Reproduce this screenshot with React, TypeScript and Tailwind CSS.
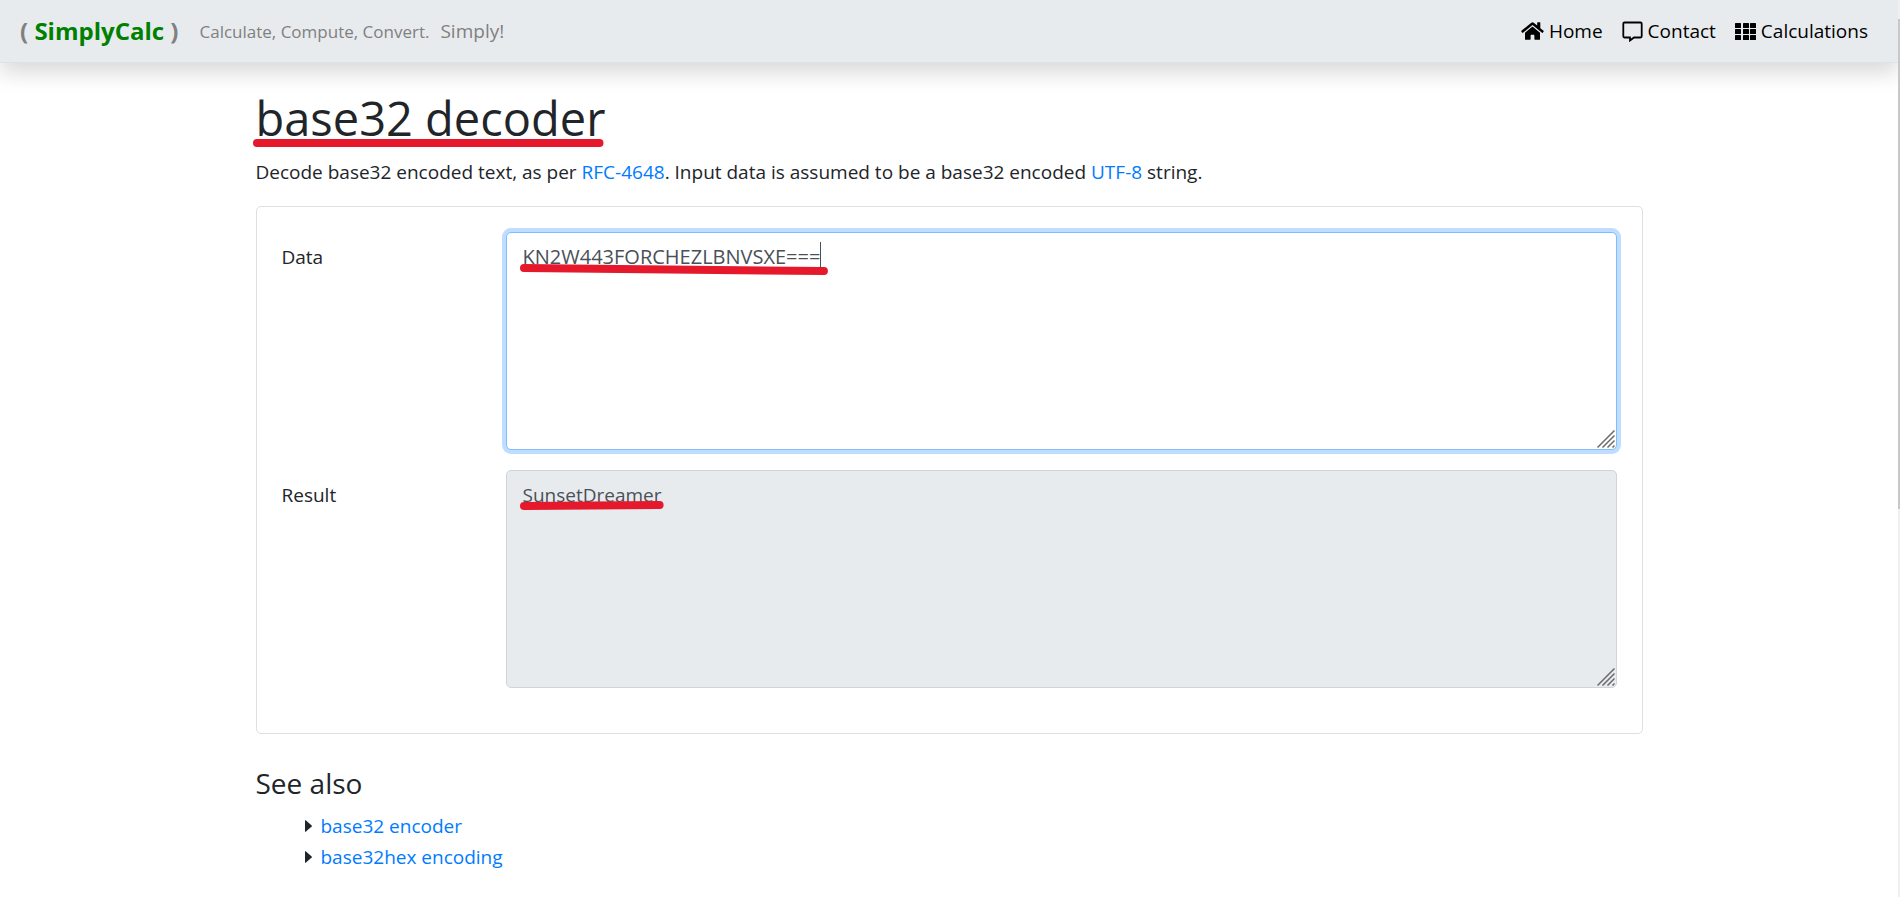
import { useState } from "react";

function decodeBase32(input: string): string {
  const alphabet = "ABCDEFGHIJKLMNOPQRSTUVWXYZ234567";
  const bytes: number[] = [];
  let buffer = 0;
  let bits = 0;
  for (const char of input.trim().replace(/=+$/, "").toUpperCase()) {
    const value = alphabet.indexOf(char);
    if (value < 0) return "";
    buffer = ((buffer << 5) | value) & 0xfff;
    bits += 5;
    if (bits >= 8) {
      bits -= 8;
      bytes.push((buffer >> bits) & 0xff);
    }
  }
  return new TextDecoder().decode(new Uint8Array(bytes));
}

function HomeIcon() {
  return (
    <svg viewBox="0 0 576 512" className="h-5 w-[23px]" fill="currentColor" aria-hidden="true">
      <path d="M280.37 148.26L96 300.11V464a16 16 0 0 0 16 16l112.06-.29a16 16 0 0 0 15.92-16V368a16 16 0 0 1 16-16h64a16 16 0 0 1 16 16v95.64a16 16 0 0 0 16 16.05L464 480a16 16 0 0 0 16-16V300L295.67 148.26a12.19 12.19 0 0 0-15.3 0zM571.6 251.47L488 182.56V44.05a12 12 0 0 0-12-12h-56a12 12 0 0 0-12 12v72.61L318.47 43a48 48 0 0 0-61 0L4.34 251.47a12 12 0 0 0-1.6 16.9l25.5 31A12 12 0 0 0 45.15 301l235.22-193.74a12.19 12.19 0 0 1 15.3 0L530.9 301a12 12 0 0 0 16.9-1.6l25.5-31a12 12 0 0 0-1.7-16.93z" />
    </svg>
  );
}

function ContactIcon() {
  return (
    <svg viewBox="0 0 21 21" className="size-[21px]" fill="none" stroke="currentColor" strokeWidth="1.8" aria-hidden="true">
      <path d="M2.500 1.500H18.500Q19.700 1.500 19.700 2.700V15.300Q19.700 16.500 18.500 16.500H12L8 19.500V16.500H2.500Q1.300 16.500 1.300 15.300V2.700Q1.300 1.500 2.500 1.500Z" />
    </svg>
  );
}

function GridIcon() {
  return (
    <svg viewBox="0 0 21 17" className="h-[17px] w-[21px]" fill="currentColor" aria-hidden="true">
      {[0, 6, 12].map((y) =>
        [0, 8, 15].map((x) => <rect key={`${x}-${y}`} x={x} y={y} width="6" height="5" rx="0.6" />),
      )}
    </svg>
  );
}

function ResizeGrip() {
  return (
    <svg
      viewBox="0 0 18 18"
      className="pointer-events-none absolute right-[2px] bottom-[2px] size-[18px]"
      stroke="#6b6b6b"
      strokeWidth="1.5"
      aria-hidden="true"
    >
      <path d="M.5 17.500L17.500.5M5.500 17.500l12-12M10.500 17.500l7-7M15.500 17.500l2-2" />
    </svg>
  );
}

function Marker({ className, rise = 0 }: { className: string; rise?: number }) {
  return (
    <svg className={`pointer-events-none absolute h-[11px] overflow-visible ${className}`} aria-hidden="true">
      <line x1="4" y1="4" x2="99%" y2={4 + rise} stroke="#e5182c" strokeWidth="8" strokeLinecap="round" />
    </svg>
  );
}

const navItems = [
  { label: "Home", icon: <HomeIcon /> },
  { label: "Contact", icon: <ContactIcon /> },
  { label: "Calculations", icon: <GridIcon /> },
];

const related = ["base32 encoder", "base32hex encoding"];

const fieldClass =
  "block h-[218px] w-full resize-none rounded-[5px] border px-4 py-[9px] leading-[30px] text-[#495057] outline-none";

export default function App() {
  const [data, setData] = useState("KN2W443FORCHEZLBNVSXE===");

  return (
    <div className="relative min-h-screen bg-white pr-[2px] font-['Open_Sans','Noto_Sans',sans-serif] text-[19px] leading-[30px] text-[#212529]">
      <header className="flex h-[63px] items-center justify-between border-b border-[#dee2e6] bg-[#e8ebee] pr-[30px] pl-5 shadow-[0_10px_20px_rgba(0,0,0,0.15)]">
        <div className="flex items-center">
          <a href="#" className="text-2xl font-bold text-[#808080]">
            ( <span className="text-[#008000]">SimplyCalc</span> )
          </a>
          <p className="ml-[21px] text-[#808080]">
            <span className="text-[17px]">Calculate, Compute, Convert.</span>
            <span className="ml-[11px]">Simply!</span>
          </p>
        </div>
        <nav className="flex items-center gap-[19px] text-black">
          {navItems.map((item) => (
            <a key={item.label} href="#" className="flex items-center gap-[5px]">
              {item.icon}
              {item.label}
            </a>
          ))}
        </nav>
      </header>

      <main className="mx-auto w-full max-w-[1387px] pt-[25px]">
        <h1 className="relative w-fit text-[47px] leading-[60px]">
          base32 decoder
          <Marker className="-left-[3px] top-[51px] w-[350px]" />
        </h1>
        <p className="mt-[9px]">
          Decode base32 encoded text, as per{" "}
          <a href="#" className="text-[#007bff]">RFC-4648</a>. Input data is assumed to be a base32 encoded{" "}
          <a href="#" className="text-[#007bff]">UTF-8</a> string.
        </p>

        <form className="mt-[19px] grid grid-cols-[224px_1fr] gap-y-5 rounded-[5px] border border-[#dfdfdf] px-[25px] pt-[25px] pb-[45px]">
          <label htmlFor="data" className="pt-[10px]">Data</label>
          <div className="relative">
            <textarea
              id="data"
              value={data}
              spellCheck={false}
              onChange={(event) => setData(event.target.value)}
              className={`${fieldClass} border-[#80bdff] bg-white text-xl leading-[30px] shadow-[0_0_0_4px_#bfdeff]`}
            />
            <Marker className="left-[14px] top-[32px] w-[307px]" rise={3} />
            <span className="pointer-events-none absolute top-[10px] left-[314px] h-[26px] w-px bg-[#495057]" />
            <ResizeGrip />
          </div>
          <label htmlFor="result" className="pt-[10px]">Result</label>
          <div className="relative">
            <textarea
              id="result"
              readOnly
              value={decodeBase32(data)}
              className={`${fieldClass} border-[#ced4da] bg-[#e8ebee] text-[19px]`}
            />
            <Marker className="left-[14px] top-[32px] w-[141px]" rise={-1} />
            <ResizeGrip />
          </div>
        </form>

        <section className="mt-[31px]">
          <h2 className="text-[28px] leading-9">See also</h2>
          <ul className="mt-[9px] pl-[49px]">
            {related.map((name) => (
              <li key={name} className="flex h-[31px] items-center gap-[9px]">
                <svg viewBox="0 0 7 12" className="h-3 w-[7px]" fill="currentColor" aria-hidden="true">
                  <path d="M0 .5Q0 0 .7.3L6.700 5.500Q7 6 6.700 6.500L.7 11.700Q0 12 0 11.500Z" />
                </svg>
                <a href="#" className="text-[#007bff]">{name}</a>
              </li>
            ))}
          </ul>
        </section>
      </main>

      <div className="absolute top-0 right-0 h-full w-[2px] bg-[#f0f0f0]" aria-hidden="true">
        <div className="mt-[19px] h-[490px] bg-[#c8c8c8]" />
      </div>
    </div>
  );
}
